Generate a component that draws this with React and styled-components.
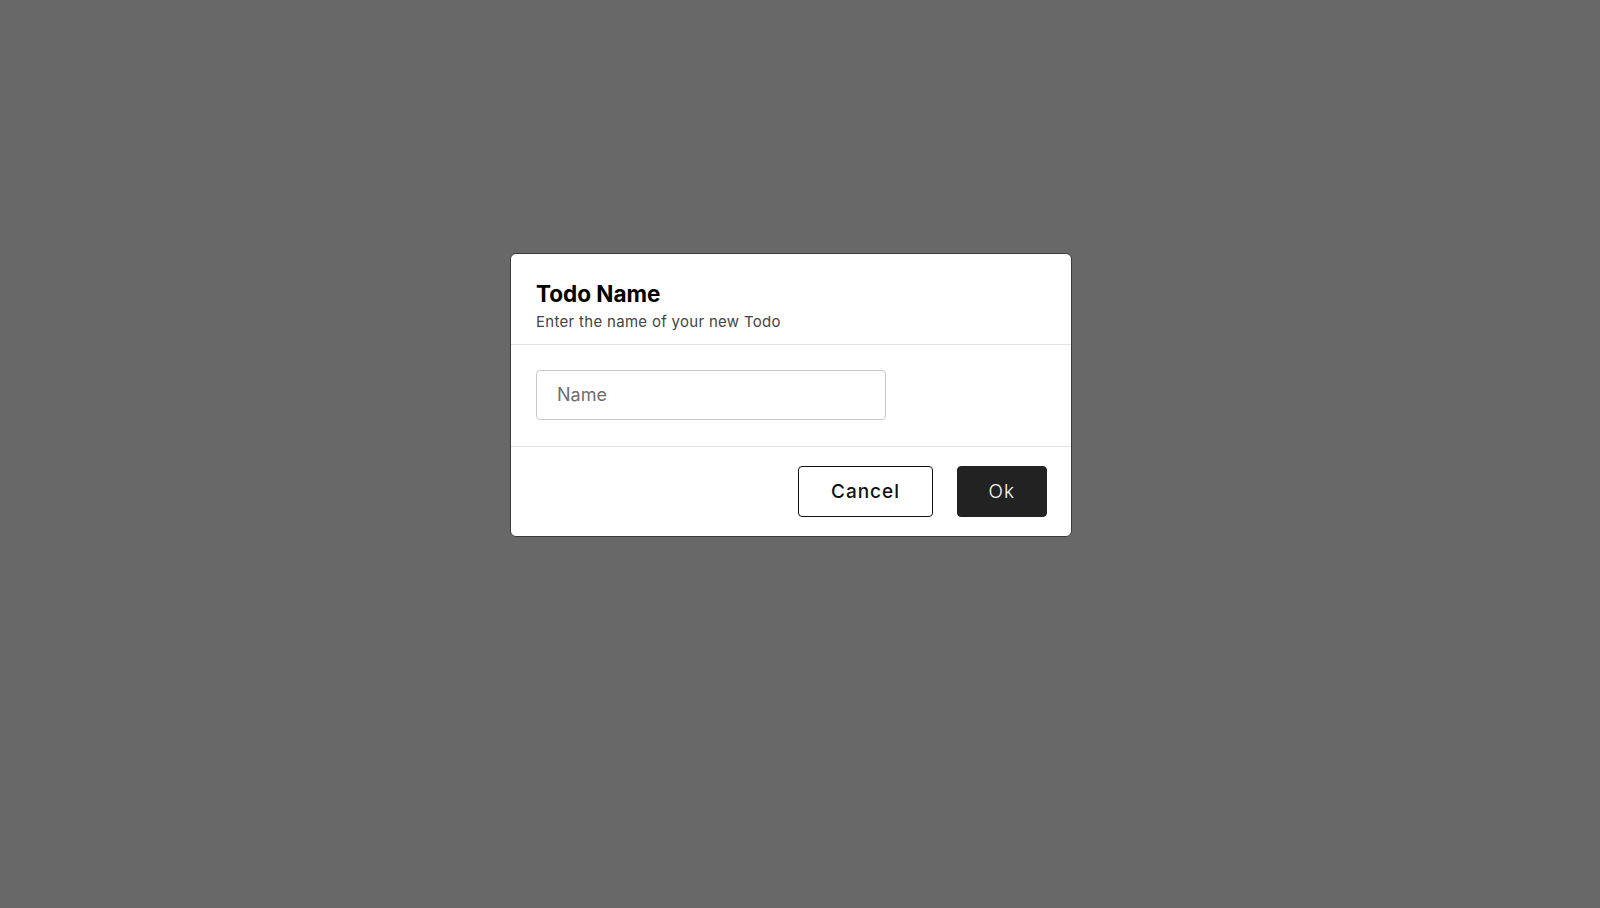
import React from 'react';
import styled, { createGlobalStyle } from 'styled-components';

const GlobalStyle = createGlobalStyle`
    html, body {
        margin: 0;
        padding: 0;
        height: 100%;
    }
    body {
        font-family: Inter, "Noto Sans", "Liberation Sans", sans-serif;
        background: #686868;
    }
    #root {
        height: 100%;
    }
`

function App() {
    return (
        <>
            <GlobalStyle />
            <Overlay>
                <Dialog>
                    <Header>
                        <Title>Todo Name</Title>
                        <Subtitle>Enter the name of your new Todo</Subtitle>
                    </Header>
                    <Body>
                        <NameInput placeholder="Name" />
                    </Body>
                    <Footer>
                        <Button>Cancel</Button>
                        <Button primary>Ok</Button>
                    </Footer>
                </Dialog>
            </Overlay>
        </>
    )
}

export default App

const Overlay = styled.div`
    min-height: 100%;
    box-sizing: border-box;
    display: flex;
    justify-content: center;
    align-items: flex-start;
    padding-top: 253px;
    padding-right: 18px;
    background: #686868;
`

const Dialog = styled.div`
    width: 562px;
    box-sizing: border-box;
    background: white;
    border: 1px solid #3a3a3a;
    border-radius: 6px;
    display: flex;
    flex-direction: column;
`

const Header = styled.div`
    padding: 26px 25px 12px;
    border-bottom: 1px solid #e4e4e4;
`

const Title = styled.h2`
    margin: 0;
    font-size: 22.5px;
    line-height: 1.2;
    font-weight: 700;
    color: #000;
`

const Subtitle = styled.p`
    margin: 5px 0 0;
    font-size: 15px;
    line-height: 1.3;
    letter-spacing: 0.3px;
    color: #444;
`

const Body = styled.div`
    padding: 25px 25px 26px;
    border-bottom: 1px solid #e4e4e4;
`

const NameInput = styled.input`
    width: 350px;
    height: 50px;
    box-sizing: border-box;
    border: 1px solid #c8c8c8;
    border-radius: 4px;
    padding: 0 20px;
    font-family: inherit;
    font-size: 18px;
    color: #222;
    outline: none;
    &::placeholder {
        color: #6e6e6e;
    }
`

const Footer = styled.div`
    display: flex;
    justify-content: flex-end;
    gap: 24px;
    padding: 19px 24px 19px 25px;
`

const Button = styled.button`
    height: 51px;
    padding: 0 ${props => props.primary ? '31px' : '31.5px'};
    border-radius: 4px;
    font-family: inherit;
    font-size: 19px;
    letter-spacing: 1px;
    cursor: pointer;
    border: 1px solid ${props => props.primary ? '#222' : '#111'};
    background: ${props => props.primary ? '#222' : 'white'};
    color: ${props => props.primary ? 'white' : '#111'};
    font-weight: ${props => props.primary ? 300 : 500};
`
